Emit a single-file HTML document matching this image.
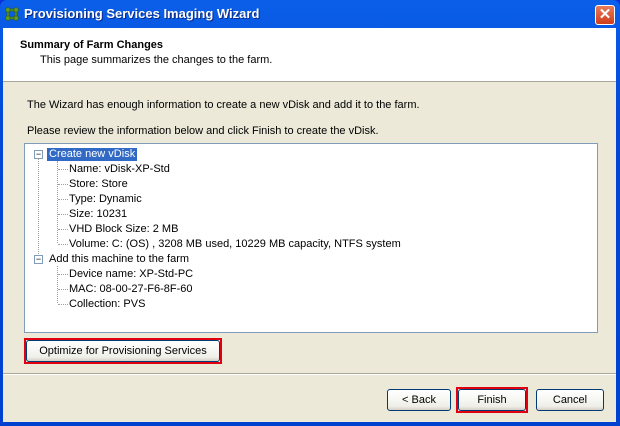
<!DOCTYPE html>
<html><head><style>
*{margin:0;padding:0;box-sizing:border-box}
body{width:620px;height:426px;overflow:hidden;font-family:"Liberation Sans",Tahoma,sans-serif;font-size:11px;color:#000;background:#0831d9}
.win{position:absolute;left:0;top:0;width:620px;height:426px;background:linear-gradient(#0a5fe8,#0346d8 30%,#0041d0);border-radius:7px 7px 0 0}
.title{position:absolute;left:24px;top:6px;color:#fff;font-weight:bold;font-size:13px;text-shadow:1px 1px #0a2a8a}
.close{position:absolute;left:595px;top:5px;width:20px;height:20px;border:1px solid #fff;border-radius:3px;background:linear-gradient(#e77c5a,#cf3d1a);color:#fff;font-weight:bold;font-size:15px;text-align:center;line-height:18px}
.client{position:absolute;left:3px;top:28px;width:613px;height:394px;background:#ece9d8}
.head{position:absolute;left:0;top:0;width:613px;height:54px;background:#fff;border-bottom:1px solid #aca899}
.abs{position:absolute;white-space:nowrap}
.tree{position:absolute;left:21px;top:115px;width:574px;height:190px;background:#fff;border:1px solid #7f9db9}
.in{position:absolute;left:0;top:2px;width:100%;height:100%}
.row{position:absolute;height:13px;line-height:13px;white-space:nowrap}
.dot{position:absolute;border-left:1px dotted #a0a0a0}
.hd{position:absolute;border-top:1px dotted #a0a0a0;width:10px}
.pm{position:absolute;width:9px;height:9px;border:1px solid #7f9db9;background:#fff;font-size:9px;line-height:6px;text-align:center}
.btn{position:absolute;height:22px;border:1px solid #003c74;border-radius:3px;background:linear-gradient(#fff,#f0f0ea 80%,#d6d0c5);text-align:center;line-height:20px}
.red{position:absolute;border:2px solid #e00010}
.sep{position:absolute;left:0;top:345px;width:613px;border-top:1px solid #aca899;border-bottom:1px solid #fff}
</style></head><body>
<div class="win">
<svg style="position:absolute;left:5px;top:7px" width="14" height="14" viewBox="0 0 14 14"><g fill="#5c9a2a" stroke="#2f5a10" stroke-width=".6"><circle cx="3" cy="3" r="2.5"/><circle cx="11" cy="3" r="2.5"/><circle cx="3" cy="11" r="2.5"/><circle cx="11" cy="11" r="2.5"/><rect x="5" y="2" width="4" height="2"/><rect x="5" y="10" width="4" height="2"/><rect x="2" y="5" width="2" height="4"/><rect x="10" y="5" width="2" height="4"/></g></svg>
<div class="title">Provisioning Services Imaging Wizard</div>
<div class="close">✕</div>
<div class="client">
<div class="head">
<div class="abs" style="left:17px;top:11px;font-weight:bold">Summary of Farm Changes</div>
<div class="abs" style="left:37px;top:26px">This page summarizes the changes to the farm.</div>
</div>
<div class="abs" style="left:24px;top:71px">The Wizard has enough information to create a new vDisk and add it to the farm.</div>
<div class="abs" style="left:24px;top:97px">Please review the information below and click Finish to create the vDisk.</div>
<div class="tree"><div class="in">
<div class="dot" style="left:13px;top:12px;height:104px"></div>
<div class="dot" style="left:32px;top:15px;height:82px"></div>
<div class="dot" style="left:32px;top:120px;height:37px"></div>
<div class="pm" style="left:9px;top:4px">−</div>
<div class="row" style="left:22px;top:2px;background:#316ac5;color:#fff;padding:0 2px">Create new vDisk</div>
<div class="hd" style="left:33px;top:23px"></div><div class="row" style="left:44px;top:17px">Name: vDisk-XP-Std</div>
<div class="hd" style="left:33px;top:38px"></div><div class="row" style="left:44px;top:32px">Store: Store</div>
<div class="hd" style="left:33px;top:53px"></div><div class="row" style="left:44px;top:47px">Type: Dynamic</div>
<div class="hd" style="left:33px;top:68px"></div><div class="row" style="left:44px;top:62px">Size: 10231</div>
<div class="hd" style="left:33px;top:83px"></div><div class="row" style="left:44px;top:77px">VHD Block Size: 2 MB</div>
<div class="hd" style="left:33px;top:98px"></div><div class="row" style="left:44px;top:92px">Volume: C: (OS) , 3208 MB used, 10229 MB capacity, NTFS system</div>
<div class="pm" style="left:9px;top:109px">−</div>
<div class="row" style="left:24px;top:107px">Add this machine to the farm</div>
<div class="hd" style="left:33px;top:128px"></div><div class="row" style="left:44px;top:122px">Device name: XP-Std-PC</div>
<div class="hd" style="left:33px;top:143px"></div><div class="row" style="left:44px;top:137px">MAC: 08-00-27-F6-8F-60</div>
<div class="hd" style="left:33px;top:158px"></div><div class="row" style="left:44px;top:152px">Collection: PVS</div>
</div></div>
<div class="btn" style="left:23px;top:312px;width:194px">Optimize for Provisioning Services</div>
<div class="red" style="left:21px;top:310px;width:198px;height:26px"></div>
<div class="sep"></div>
<div class="btn" style="left:384px;top:361px;width:64px">&lt; Back</div>
<div class="btn" style="left:455px;top:361px;width:68px">Finish</div>
<div class="red" style="left:453px;top:359px;width:72px;height:26px"></div>
<div class="btn" style="left:533px;top:361px;width:68px">Cancel</div>
</div>
</div>
</body></html>
